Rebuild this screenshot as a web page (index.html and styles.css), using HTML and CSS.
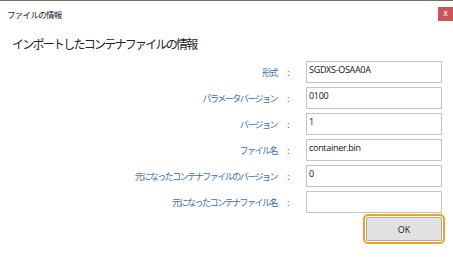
FILE: index.html
```html
<!DOCTYPE html>
<html lang="ja">
<head>
  <meta charset="UTF-8">
  <title>ファイルの情報</title>
  <link rel="stylesheet" href="styles.css">
</head>
<body>
  <div class="window">
    <div class="titlebar">
      <span class="title">ファイルの情報</span>
      <span class="close">x</span>
    </div>

    <h1>インポートしたコンテナファイルの情報</h1>

    <div class="info">
      <label>形式</label><span class="colon">:</span>
      <div class="box">SGDXS-OSAA0A</div>

      <label>パラメータバージョン</label><span class="colon">:</span>
      <div class="box">0100</div>

      <label>バージョン</label><span class="colon">:</span>
      <div class="box">1</div>

      <label>ファイル名</label><span class="colon">:</span>
      <div class="box">container.bin</div>

      <label>元になったコンテナファイルのバージョン</label><span class="colon">:</span>
      <div class="box">0</div>

      <label>元になったコンテナファイル名</label><span class="colon">:</span>
      <div class="box"></div>
    </div>

    <div class="buttons">
      <span class="focus"><button class="ok">OK</button></span>
    </div>
  </div>
</body>
</html>
```

FILE: styles.css
```css
body {
  margin: 0;
  background-color: #fff;
  font-family: "Noto Sans CJK JP", "Open Sans", sans-serif;
}
.window {
  width: 453px;
  height: 257px;
  border-top: 1px solid #77705a;
  box-sizing: border-box;
}
.titlebar {
  display: flex;
  justify-content: space-between;
  align-items: flex-start;
  height: 24px;
}
.title {
  font-size: 8.5px;
  letter-spacing: -0.7px;
  color: #222;
  margin: 7px 0 0 7px;
}
.close {
  width: 15px;
  height: 14px;
  margin-top: 6px;
  background-color: #c9545a;
  color: #fff;
  font-family: "DejaVu Sans", sans-serif;
  font-size: 8px;
  line-height: 13px;
  text-align: center;
}
h1 {
  font-size: 12px;
  font-weight: normal;
  letter-spacing: -1.75px;
  color: #222;
  margin: 10px 0 9px 12px;
}
.info {
  display: grid;
  grid-template-columns: 1fr 29px 136px;
  grid-auto-rows: 22px;
  row-gap: 4px;
  padding-right: 11px;
  align-items: center;
}
.info label {
  font-size: 9px;
  letter-spacing: -1.5px;
  color: #3b6fa8;
  text-align: right;
}
.colon {
  font-size: 9px;
  color: #3b6fa8;
  padding-left: 10px;
}
.box {
  height: 22px;
  box-sizing: border-box;
  border: 1px solid #c4c4c4;
  font-family: "Open Sans", sans-serif;
  font-size: 9px;
  letter-spacing: -0.3px;
  color: #111;
  padding: 2px 0 0 2px;
  line-height: 12px;
}
.buttons {
  display: flex;
  justify-content: flex-end;
  padding: 1px 8px 0 0;
}
.focus {
  display: flex;
  padding: 1px;
  border: 2px solid #f4a21c;
  border-radius: 5px;
}
.ok {
  width: 76px;
  height: 24px;
  background-color: #e1e1e1;
  border: 1px solid #adadad;
  border-radius: 1px;
  font-family: "Open Sans", sans-serif;
  font-size: 9px;
  color: #222;
}
```
